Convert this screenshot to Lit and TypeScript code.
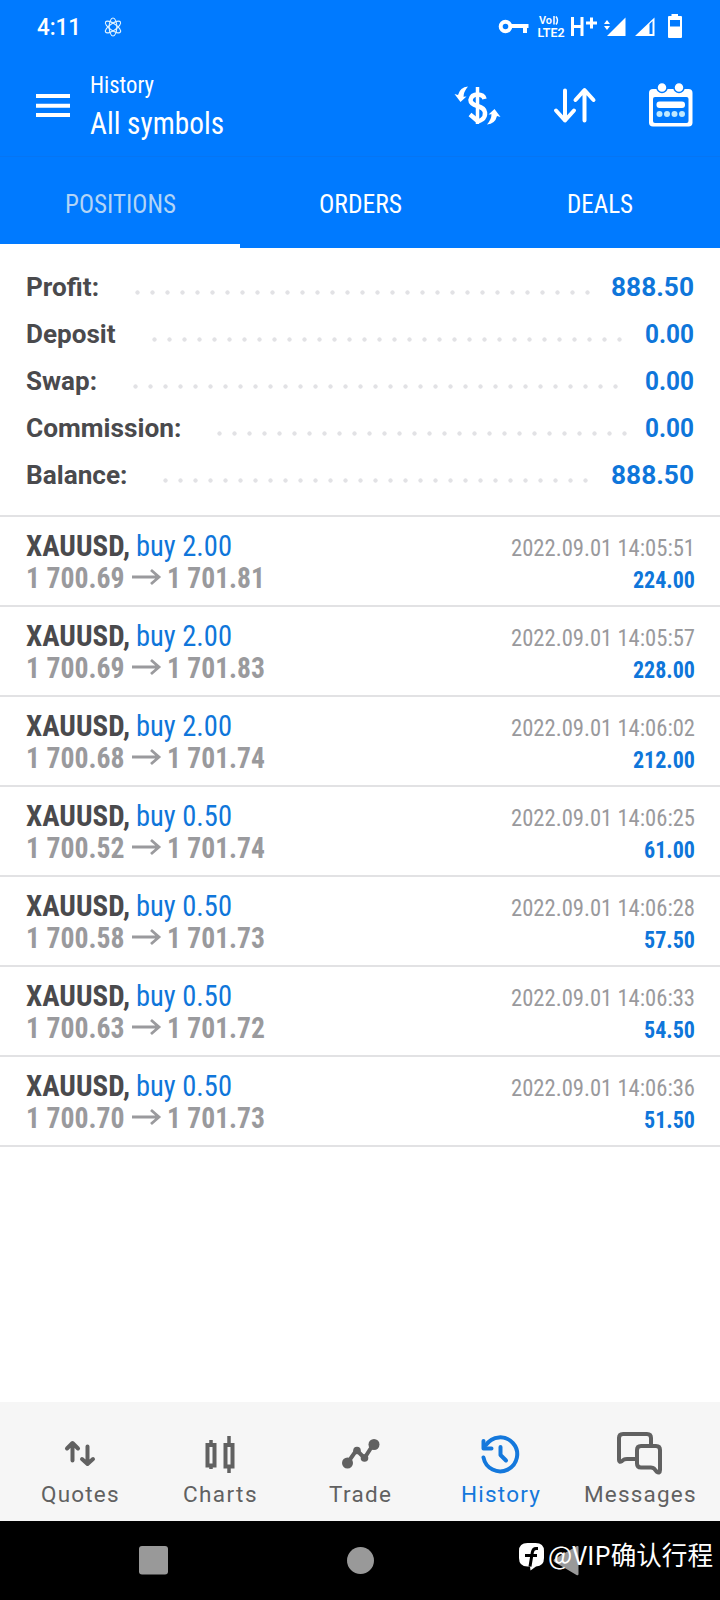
import { LitElement, html, svg, css, TemplateResult } from "lit";
import { customElement } from "lit/decorators.js";

/** One run of text, set to an exact advance width. */
function run(text: string, width: number, size: number, cls = "", adjust = "spacingAndGlyphs") {
  const h = Math.round(size * 1.2);
  return html`<svg class="run ${cls}" width=${width} height=${h}>
    <text x="0" y=${Math.round(size * 0.93)} font-size=${size} textLength=${width} lengthAdjust=${adjust}>${text}</text>
  </svg>`;
}

const icon = (w: number, h: number, body: TemplateResult | unknown, cls = "") =>
  html`<svg class="icon ${cls}" width=${w} height=${h} viewBox="0 0 ${w} ${h}">${body}</svg>`;

interface Total { label: string; w: number; start: number; dots: number; value: string; vw: number }
const totals: Total[] = [
  { label: "Profit:", w: 73, start: 104, dots: 31, value: "888.50", vw: 83 },
  { label: "Deposit", w: 89.5, start: 121, dots: 32, value: "0.00", vw: 49 },
  { label: "Swap:", w: 71, start: 102, dots: 33, value: "0.00", vw: 49 },
  { label: "Commission:", w: 155.5, start: 186, dots: 28, value: "0.00", vw: 49 },
  { label: "Balance:", w: 101.5, start: 132, dots: 29, value: "888.50", vw: 83 },
];

interface Deal { vol: string; open: string; close: string; time: string; profit: string; pw: number }
const deals: Deal[] = [
  { vol: "2.00", open: "1 700.69", close: "1 701.81", time: "14:05:51", profit: "224.00", pw: 62 },
  { vol: "2.00", open: "1 700.69", close: "1 701.83", time: "14:05:57", profit: "228.00", pw: 62 },
  { vol: "2.00", open: "1 700.68", close: "1 701.74", time: "14:06:02", profit: "212.00", pw: 62 },
  { vol: "0.50", open: "1 700.52", close: "1 701.74", time: "14:06:25", profit: "61.00", pw: 51 },
  { vol: "0.50", open: "1 700.58", close: "1 701.73", time: "14:06:28", profit: "57.50", pw: 51 },
  { vol: "0.50", open: "1 700.63", close: "1 701.72", time: "14:06:33", profit: "54.50", pw: 51 },
  { vol: "0.50", open: "1 700.70", close: "1 701.73", time: "14:06:36", profit: "51.50", pw: 51 },
];

const menu = svg`<path d="M0 2h34M0 11.7h34M0 21h34" stroke="#fff" stroke-width="4"/>`;
const atom = svg`<g fill="none" stroke="#dff3ff" stroke-width="1.1"><ellipse cx="9" cy="10" rx="3.8" ry="9"/><ellipse cx="9" cy="10" rx="3.400" ry="9" transform="rotate(55 9 10)"/><ellipse cx="9" cy="10" rx="3.400" ry="9" transform="rotate(-55 9 10)"/></g>`;
const statusIcons = svg`
  <g fill="none" stroke="#fff" stroke-width="4"><circle cx="7.5" cy="18.5" r="4.8"/><path d="M12 18h18.500M27 18v7"/></g>
  <text x="41" y="16" class="tiny" font-size="10.500" textLength="13" lengthAdjust="spacingAndGlyphs">Vo</text>
  <path d="M56 8v8.500M58 8.500q3 4 0 8" stroke="#fff" stroke-width="1.500" fill="none"/>
  <text x="39.500" y="29" class="tiny" font-size="12" textLength="27" lengthAdjust="spacingAndGlyphs">LTE2</text>
  <path d="M74.500 9v19M84 9v19M74 18.500h10M88 15h11M93.500 9.500v11" stroke="#fff" stroke-width="3" fill="none"/>
  <g fill="#fff"><path d="M106 16l3-4 3 4zM106 18l3 4 3-4zM127.500 9.500v18.500h-18.500z"/></g>
  <path fill-rule="evenodd" fill="#fff" d="M156.500 9.500v18.500h-19.500zM151.500 16v10h3v-13z"/>
  <path fill-rule="evenodd" fill="#fff" d="M173.500 6h6.500v2h3q1 0 1 1v20q0 1-1 1h-12q-1 0-1-1v-20q0-1 1-1h2.500zM172 12v6.500h10v-6.500z"/>`;
const dollarArrow = svg`<path fill="#fff" d="M13 3.500q-8 .500-10 8.500l-3.500-1 6 8 6-5.500-3 .300q0-5 4.500-10.300z"/>`;
const dollar = svg`
  <g fill="none" stroke="#fff">
    <path d="M29.500 16q-1-4.500-7-4.500t-7 5.500q0 4 7 6t7.500 6.500-3 7-5 1-7-6" stroke-width="4.500" />
    <path d="M22.500 4v37" stroke-width="3.500"/>
  </g>
  ${dollarArrow}<g transform="rotate(180 22.500 22.500)">${dollarArrow}</g>`;
const sort = svg`<g fill="none" stroke="#fff" stroke-width="4" stroke-linecap="round" stroke-linejoin="round"><path d="M11 7.500v30M2 27.500l9 10 9-10M30.500 37.500v-30M21.500 17l9-10 9 10"/></g>`;
const calendar = svg`
  <rect x="0" y="6" width="43.500" height="37.500" rx="4" fill="#fff"/>
  <circle cx="13" cy="4.500" r="5" fill="#fff" stroke="#007aff" stroke-width="1.500"/><circle cx="30" cy="4.500" r="5" fill="#fff" stroke="#007aff" stroke-width="1.500"/>
  <rect x="4" y="14" width="35.500" height="26" rx="2" fill="#007aff"/>
  <rect x="7.500" y="18.500" width="28.500" height="6.500" rx="3" fill="#fff"/>
  <g fill="#bfe9ff"><circle cx="10.500" cy="31" r="3"/><circle cx="18" cy="31" r="3"/><circle cx="25.500" cy="31" r="3"/><circle cx="33" cy="31" r="3"/></g>`;
const arrow = svg`<path d="M0 10h27M19 3l8 7-8 7" fill="none" stroke="#9a9a9d" stroke-width="2.800"/>`;

const navIcons = {
  quotes: svg`<g fill="none" stroke="#616161" stroke-width="4" stroke-linecap="round" stroke-linejoin="round"><path d="M18 30V13M12.500 18L18 12.500 23.500 18M33 16v16M27.500 28.500l5.500 5 5.500-5" transform="translate(-.5 -.5)"/></g>`,
  charts: svg`<g fill="none" stroke="#616161"><path d="M16 9v5M16 34v4M34 5v9M34 36v6" stroke-width="3.500"/><path d="M12.500 14h7v20.500h-7zM30.500 14h7v21.500h-7z" stroke-width="4"/></g>`,
  trade: svg`<path d="M12 32l9-13 8 8 9-14" fill="none" stroke="#616161" stroke-width="4" transform="translate(.5 0)"/><g fill="#616161"><circle cx="12.500" cy="32" r="5.500"/><circle cx="22" cy="19.500" r="3.800"/><circle cx="29.500" cy="27" r="3.800"/><circle cx="39" cy="13.500" r="5.500"/></g>`,
  history: svg`<g fill="none" stroke="#1478dc" stroke-width="4" stroke-linecap="round" stroke-linejoin="round"><path d="M8.500 26.500a17 17 0 1 0 2.500-12.500"/><path d="M8.500 10v7.500h8"/><path d="M25.500 16v8l5.500 5.500"/></g>`,
  messages: svg`<g fill="none" stroke="#616161" stroke-width="4" stroke-linejoin="round" transform="translate(-2 0)"><path d="M38 14V7q0-4-4-4H10q-4 0-4 4v22q0 3 3 1l2-1.500q1-.500 3-.500h8"/><path d="M28 15h15q4 0 4 4v20q0 4-3.500 1.500l-2.500-3q-1-1-3-1H28q-4 0-4-4V19q0-4 4-4z"/></g>`,
};
const nav = [
  { name: "Quotes", w: 77.5, art: navIcons.quotes },
  { name: "Charts", w: 73.5, art: navIcons.charts },
  { name: "Trade", w: 62, art: navIcons.trade },
  { name: "History", w: 79, art: navIcons.history, on: true },
  { name: "Messages", w: 111.5, art: navIcons.messages },
];

@customElement("app-root")
export class AppRoot extends LitElement {
  static styles = css`
    :host { display: flex; flex-direction: column; width: 720px; height: 1600px; background: #fff; overflow: hidden; font-family: "Roboto Condensed", Roboto, sans-serif; }
    svg { display: block; flex: none; overflow: visible; }
    .run { fill: currentColor; font-family: "Roboto Condensed", Roboto, sans-serif; }
    .tiny { fill: #fff; font-family: Roboto, sans-serif; font-weight: 600; }
    .plain { font-family: Roboto, sans-serif; }
    .m { font-weight: 500; }
    .b { font-weight: 700; }
    .status { display: flex; height: 56px; padding: 13px 32px 0 37px; box-sizing: border-box; background: #007aff; color: #fff; }
    .status .atom { margin: 4px 0 0 23px; }
    .status .right { margin: -5px 0 0 auto; }
    .bar { display: flex; height: 101px; box-sizing: border-box; padding: 0 27px 0 36px; background: #007aff; color: #fff; border-bottom: 1px solid #0675f3; }
    .bar .menu { margin-top: 38px; }
    .titles { margin: 15px auto 0 20px; display: flex; flex-direction: column; }
    .titles .run + .run { margin-top: 4px; }
    .tools { display: flex; padding-top: 27px; }
    .tabs { display: grid; grid-template-columns: repeat(3, 1fr); height: 91px; background: #007aff; color: #fff; }
    .tab { display: flex; justify-content: center; box-sizing: border-box; padding-top: 32px; }
    .tab.on { padding-left: 1px; color: #b2d4f6; border-bottom: 4px solid #fff; }
    .totals { height: 267px; box-sizing: border-box; padding: 16px 26px 0 26px; color: #4a4a4d; }
    .total { display: grid; height: 47px; align-items: center; }
    .total .run:last-child { justify-self: end; }
    .dots { height: 15px; margin-top: 10px; background: radial-gradient(circle, #e2e2e5 1.800px, transparent 2.500px) 0 0 / 15px 15px; }
    .blue { color: #0f76da; }
    .deal { display: flex; justify-content: space-between; height: 90px; box-sizing: border-box; padding: 12px 25px 0 26px; border-top: 2px solid #e2e2e4; }
    .list { border-bottom: 2px solid #e2e2e4; }
    .line { display: flex; height: 32px; }
    .left .line { gap: 6px; color: #4a4a4d; }
    .left .line + .line { color: #9a9a9d; gap: 7px; }
    .arr { margin-top: 6px; }
    .right-col { padding-top: 5px; color: #9a9a9d; display: flex; flex-direction: column; }
    .right-col .line { justify-content: flex-end; }
    .nav { display: grid; grid-template-columns: repeat(5, 140px); justify-content: center; margin-top: auto; height: 119px; background: #f6f6f6; color: #616161; }
    .item { display: flex; flex-direction: column; align-items: center; padding-top: 29px; }
    .item .run { margin-top: 4px; }
    .item.on { color: #1478dc; }
    .system { position: relative; height: 79px; background: #000; }
    .keys { display: block; }
    .mark { position: absolute; right: 7px; top: 20px; display: flex; gap: 5px; color: #fff; }
    .mark .cjk { font-family: "Noto Sans CJK SC", sans-serif; font-weight: 400; }
  `;

  render() {
    return html`
      <div class="status">
        ${run("4:11", 44, 24, "plain m")} ${icon(18, 20, atom, "atom")}
        <div class="right">${icon(190, 44, statusIcons)}</div>
      </div>
      <div class="bar">
        ${icon(34, 24, menu, "menu")}
        <div class="titles">${run("History", 64, 24)} ${run("All symbols", 134, 32)}</div>
        <div class="tools">
          ${icon(99, 44, dollar)} ${icon(95, 44, sort)} ${icon(44, 44, calendar)}
        </div>
      </div>
      <div class="tabs">
        <div class="tab on">${run("POSITIONS", 111, 26)}</div>
        <div class="tab">${run("ORDERS", 83, 26)}</div>
        <div class="tab">${run("DEALS", 66, 26)}</div>
      </div>
      <div class="totals">
        ${totals.map((t) => html`<div class="total" style="grid-template-columns:${t.start}px ${t.dots * 15}px 1fr">
          ${run(t.label, t.w, 26, "plain b")}<div class="dots"></div>${run(t.value, t.vw, 26, "plain b blue")}
        </div>`)}
      </div>
      <div class="list">
        ${deals.map((d) => html`<div class="deal">
          <div class="left">
            <div class="line">${run("XAUUSD,", 104, 29.5, "b")}${run("buy " + d.vol, 96, 29.5, "blue")}</div>
            <div class="line">${run(d.open, 98.5, 29.5, "b")}${icon(28, 20, arrow, "arr")}${run(d.close, 98, 29.5, "b")}</div>
          </div>
          <div class="right-col">
            <div class="line">${run("2022.09.01 " + d.time, 184, 24)}</div>
            <div class="line">${run(d.profit, d.pw, 24, "b blue")}</div>
          </div>
        </div>`)}
      </div>
      <div class="nav">
        ${nav.map((n) => html`<div class="item ${n.on ? "on" : ""}">${icon(50, 46, n.art)}${run(n.name, n.w, 22.5, "plain", "spacing")}</div>`)}
      </div>
      <div class="system">
        <svg class="keys" width="720" height="79"><g fill="#999"><rect x="139" y="25" width="29" height="28.500" rx="3"/><circle cx="360.500" cy="39.500" r="13.500"/><path d="M577 25q1.500-.500 1.500 1v27q0 2-2 1l-22-13q-2-1.500 0-3z"/></g></svg>
        <div class="mark">
          ${icon(24, 28, svg`<path fill="#fff" d="M8.500 2h8q8.500 0 8.500 8v7q0 8-8 8.500l-5.500 4-.500-4h-2.500q-8.500 0-8.500-8.500v-7q0-8 8.500-8z"/><path d="M19 7.500h-2q-3 0-3.700 4l-2.300 14M6 14.500h12" stroke="#000" stroke-width="3" fill="none"/>`)}
          ${run("@VIP确认行程", 165, 26, "cjk")}
        </div>
      </div>`;
  }
}
